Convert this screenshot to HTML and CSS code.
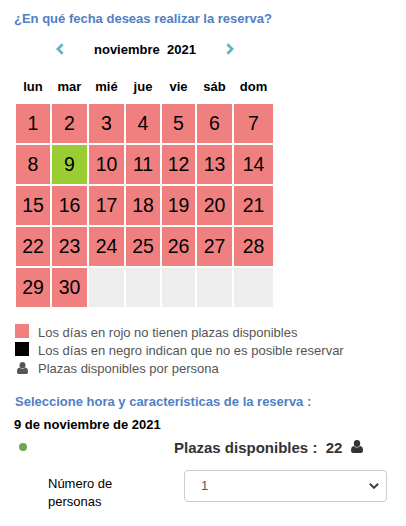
FILE: index.html
```html
<!DOCTYPE html>
<html lang="es">
<head>
<meta charset="utf-8">
<title>Reserva</title>
<link rel="stylesheet" href="styles.css">
</head>
<body>
<main class="booking">
  <h2 class="heading">¿En qué fecha deseas realizar la reserva?</h2>
  <div class="month">
    <svg class="arrow" viewBox="0 0 8 12"><path d="M6.6 1.2 1.9 6l4.7 4.8"/></svg>
    <span class="month-name">noviembre&nbsp; 2021</span>
    <svg class="arrow" viewBox="0 0 8 12"><path d="M1.4 1.2 6.1 6l-4.7 4.8"/></svg>
  </div>
  <div class="cal weekdays"><span>lun</span><span>mar</span><span>mié</span><span>jue</span><span>vie</span><span>sáb</span><span>dom</span></div>
  <div class="cal days">
    <span>1</span><span>2</span><span>3</span><span>4</span><span>5</span><span>6</span><span>7</span>
    <span>8</span><span class="free">9</span><span>10</span><span>11</span><span>12</span><span>13</span><span>14</span>
    <span>15</span><span>16</span><span>17</span><span>18</span><span>19</span><span>20</span><span>21</span>
    <span>22</span><span>23</span><span>24</span><span>25</span><span>26</span><span>27</span><span>28</span>
    <span>29</span><span>30</span><span class="none"></span><span class="none"></span><span class="none"></span><span class="none"></span><span class="none"></span>
  </div>
  <ul class="legend">
    <li><i class="swatch red"></i><span>Los días en rojo no tienen plazas disponibles</span></li>
    <li><i class="swatch black"></i><span>Los días en negro indican que no es posible reservar</span></li>
    <li><svg class="person" viewBox="0 0 12 12" preserveAspectRatio="none"><circle cx="6" cy="3.2" r="3.2"/><path d="M2.9 5.6C.9 5.8 0 7.3 0 9.7 0 11.2.8 12 2.1 12h7.8c1.3 0 2.1-.8 2.1-2.3 0-2.4-.9-3.9-2.9-4.1a4.6 4.6 0 0 1-6.2 0z"/></svg><span>Plazas disponibles por persona</span></li>
  </ul>
  <h2 class="heading second">Seleccione hora y características de la reserva :</h2>
  <p class="date">9 de noviembre de 2021</p>
  <div class="slot">
    <i class="dot"></i>
    <span class="avail">Plazas disponibles :&nbsp; 22</span>
    <svg class="person" viewBox="0 0 12 12" preserveAspectRatio="none"><circle cx="6" cy="3.2" r="3.2"/><path d="M2.9 5.6C.9 5.8 0 7.3 0 9.7 0 11.2.8 12 2.1 12h7.8c1.3 0 2.1-.8 2.1-2.3 0-2.4-.9-3.9-2.9-4.1a4.6 4.6 0 0 1-6.2 0z"/></svg>
  </div>
  <div class="field">
    <span class="label">Número de personas</span>
    <div class="select"><span>1</span><svg class="chevron" viewBox="0 0 10 6"><path d="M.8.8 5 4.8 9.2.8"/></svg></div>
  </div>
</main>
</body>
</html>
```
FILE: styles.css
```css
* { box-sizing: border-box; }
body { margin: 0; background: #fff; color: #000; font: 13px/18px "Liberation Sans", Arial, sans-serif; }
.booking { width: 406px; height: 526px; padding: 10px 0 0 14px; overflow: hidden; white-space: nowrap; }
.heading { margin: 0; height: 18px; font-size: 13px; line-height: 18px; color: #4f80c4; }
.month { display: flex; align-items: center; height: 18px; margin-top: 12px; padding-left: 42px; font-weight: bold; }
.month-name { width: 102px; margin: 2px 30px 0 30px; }
.arrow { width: 8px; height: 12px; fill: none; stroke: #62b4c9; stroke-width: 2.7; }
.cal { display: grid; grid-template-columns: 34px 35px 35px 34px 33px 35px 39px; gap: 2px; margin-left: 2px; text-align: center; }
.weekdays { height: 18px; margin-top: 20px; font-weight: bold; }
.days { grid-auto-rows: 39px; margin-top: 8px; font-size: 19.5px; line-height: 38px; }
.days span { background: #f08080; }
.days .free { background: #9acd32; }
.days .none { background: #eee; }
.legend { list-style: none; margin: 16px 0 0; padding: 0 0 0 1px; color: #555; }
.legend li { display: flex; align-items: center; height: 18px; }
.legend span { padding-top: 2px; }
.swatch { width: 14px; height: 14px; margin: -2px 9px 0 0; }
.red { background: #f08080; }
.black { background: #000; }
.person { width: 12px; height: 13px; fill: currentColor; }
.legend .person { width: 11px; height: 12px; margin: 0 10px 0 2px; }
.second { margin-top: 16px; padding-left: 1px; }
.date { margin: 5px 0 0; height: 18px; font-weight: bold; }
.slot { display: flex; align-items: center; height: 20px; margin-top: 4px; padding-left: 5px; color: #333; font-size: 15px; font-weight: bold; }
.dot { width: 8px; height: 8px; margin-top: -2px; border-radius: 50%; background: #6aa84f; }
.avail { width: 169px; margin: 0 8px 0 147px; }
.slot .person { margin-top: -3px; }
.field { display: flex; margin-top: 12px; padding-left: 34px; }
.label { width: 100px; margin: 5px 36px 0 0; white-space: normal; }
.select { display: flex; align-items: center; justify-content: space-between; width: 203px; height: 32px; padding: 0 7px 0 16px; border: 1px solid #ccc; border-radius: 4px; color: #555; }
.chevron { width: 10px; height: 6px; fill: none; stroke: #444; stroke-width: 2; }
```
